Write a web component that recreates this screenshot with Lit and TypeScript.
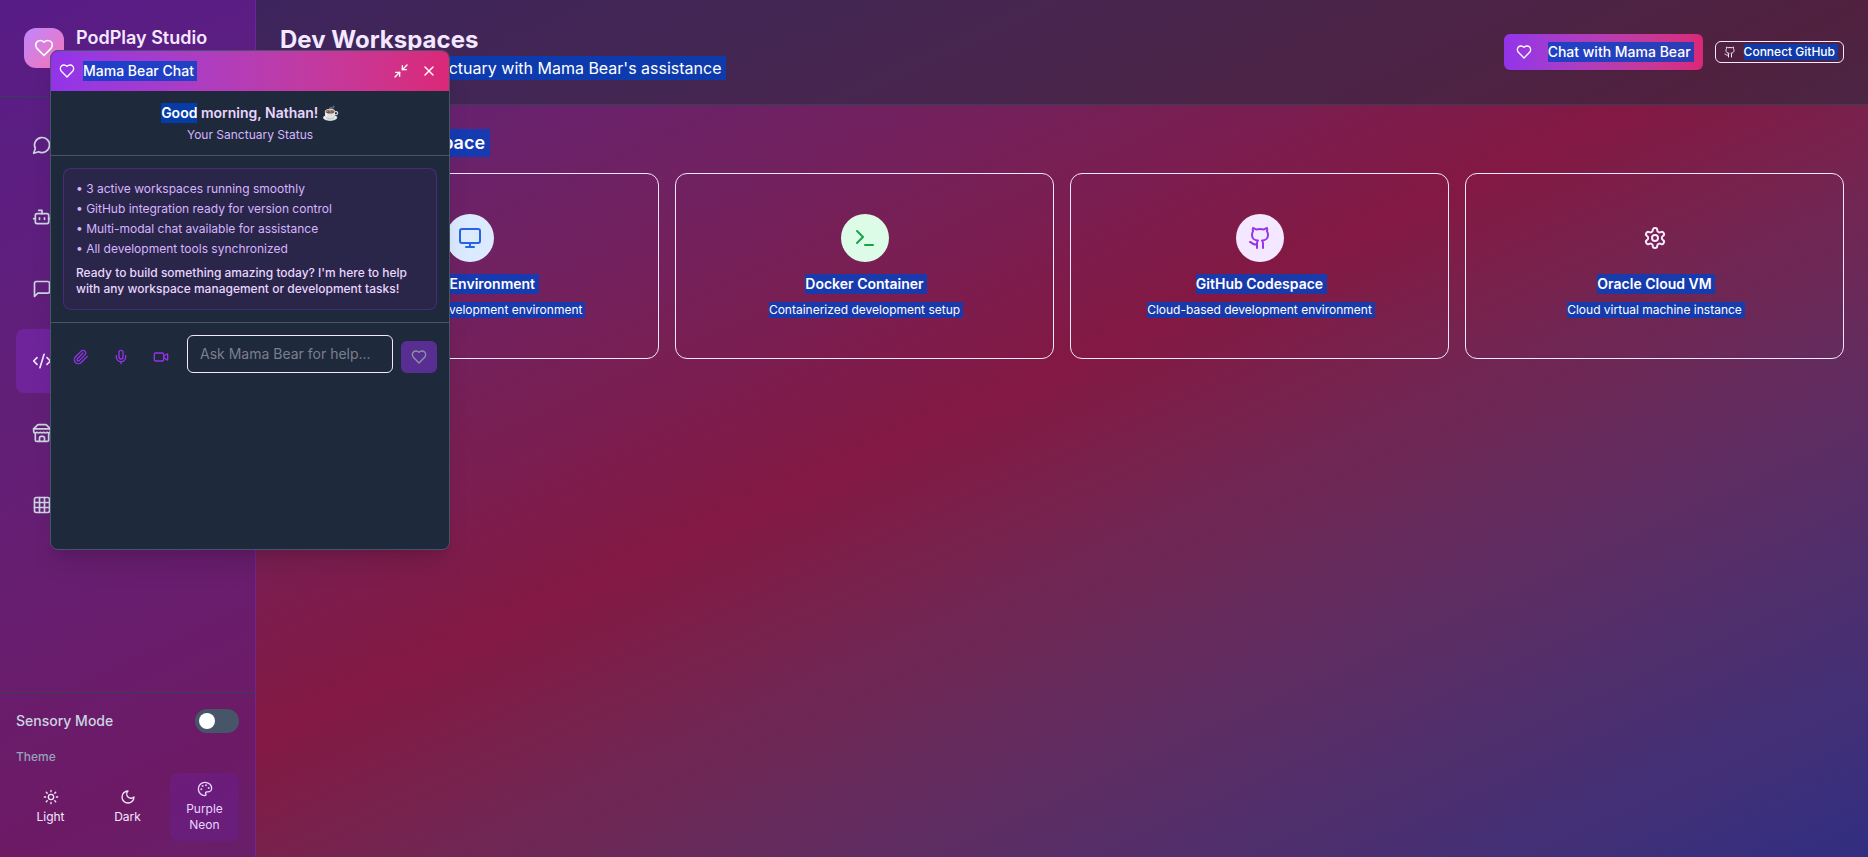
import { LitElement, html, css, svg } from "lit";
import { customElement, property } from "lit/decorators.js";

const ICONS: Record<string, unknown> = {
  heart: svg`<path d="M19 14c1.49-1.46 3-3.21 3-5.5A5.5 5.5 0 0 0 16.5 3c-1.76 0-3 .5-4.5 2-1.5-1.5-2.74-2-4.5-2A5.5 5.5 0 0 0 2 8.5c0 2.3 1.5 4.05 3 5.5l7 7Z"/>`,
  messageCircle: svg`<path d="M7.9 20A9 9 0 1 0 4 16.1L2 22Z"/>`,
  bot: svg`<path d="M12 8V4H8"/><rect width="16" height="12" x="4" y="8" rx="2"/><path d="M2 14h2M20 14h2M15 13v2M9 13v2"/>`,
  messageSquare: svg`<path d="M21 15a2 2 0 0 1-2 2H7l-4 4V5a2 2 0 0 1 2-2h14a2 2 0 0 1 2 2z"/>`,
  code: svg`<path d="m18 16 4-4-4-4"/><path d="m6 8-4 4 4 4"/><path d="m14.5 4-5 16"/>`,
  store: svg`<path d="m2 7 4.41-4.41A2 2 0 0 1 7.83 2h8.34a2 2 0 0 1 1.42.59L22 7"/><path d="M4 12v8a2 2 0 0 0 2 2h12a2 2 0 0 0 2-2v-8"/><path d="M15 22v-4a2 2 0 0 0-2-2h-2a2 2 0 0 0-2 2v4"/><path d="M2 7h20"/><path d="M22 7v3a2 2 0 0 1-2 2a2.7 2.7 0 0 1-1.59-.63.7.7 0 0 0-.82 0A2.7 2.7 0 0 1 16 12a2.7 2.7 0 0 1-1.59-.63.7.7 0 0 0-.82 0A2.7 2.7 0 0 1 12 12a2.7 2.7 0 0 1-1.59-.63.7.7 0 0 0-.82 0A2.7 2.7 0 0 1 8 12a2.7 2.7 0 0 1-1.59-.63.7.7 0 0 0-.82 0A2.7 2.7 0 0 1 4 12a2 2 0 0 1-2-2V7"/>`,
  grid: svg`<rect width="18" height="18" x="3" y="3" rx="2"/><path d="M3 9h18M3 15h18M9 3v18M15 3v18"/>`,
  paperclip: svg`<path d="m21.44 11.05-9.19 9.19a6 6 0 0 1-8.49-8.49l8.57-8.57A4 4 0 1 1 18 8.84l-8.59 8.57a2 2 0 0 1-2.83-2.83l8.49-8.48"/>`,
  mic: svg`<path d="M12 2a3 3 0 0 0-3 3v7a3 3 0 0 0 6 0V5a3 3 0 0 0-3-3Z"/><path d="M19 10v2a7 7 0 0 1-14 0v-2"/><path d="M12 19v3"/>`,
  video: svg`<path d="m16 13 5.223 3.482a.5.5 0 0 0 .777-.416V7.87a.5.5 0 0 0-.752-.432L16 10.5"/><rect x="2" y="6" width="14" height="12" rx="2"/>`,
  minimize: svg`<polyline points="4 14 10 14 10 20"/><polyline points="20 10 14 10 14 4"/><path d="M14 10l7-7M3 21l7-7"/>`,
  close: svg`<path d="M18 6 6 18"/><path d="m6 6 12 12"/>`,
  sun: svg`<circle cx="12" cy="12" r="4"/><path d="M12 2v2M12 20v2M4.93 4.93l1.41 1.41M17.66 17.66l1.41 1.41M2 12h2M20 12h2M6.34 17.66l-1.41 1.41M19.07 4.93l-1.41 1.41"/>`,
  moon: svg`<path d="M12 3a6 6 0 0 0 9 9 9 9 0 1 1-9-9Z"/>`,
  palette: svg`<circle cx="13.5" cy="6.5" r=".5" fill="currentColor"/><circle cx="17.5" cy="10.5" r=".5" fill="currentColor"/><circle cx="8.5" cy="7.5" r=".5" fill="currentColor"/><circle cx="6.5" cy="12.5" r=".5" fill="currentColor"/><path d="M12 2C6.5 2 2 6.5 2 12s4.5 10 10 10c.926 0 1.648-.746 1.648-1.688 0-.437-.18-.835-.437-1.125-.29-.289-.438-.652-.438-1.125a1.64 1.64 0 0 1 1.668-1.668h1.996c3.051 0 5.555-2.503 5.555-5.554C21.965 6.012 17.461 2 12 2z"/>`,
  monitor: svg`<rect width="20" height="14" x="2" y="3" rx="2"/><path d="M8 21h8M12 17v4"/>`,
  terminal: svg`<polyline points="4 17 10 11 4 5"/><path d="M12 19h8"/>`,
  github: svg`<path d="M15 22v-4a4.8 4.8 0 0 0-1-3.5c3 0 6-2 6-5.5.08-1.25-.27-2.48-1-3.5.28-1.15.28-2.35 0-3.5 0 0-1 0-3 1.5-2.64-.5-5.36-.5-8 0C6 2 5 2 5 2c-.3 1.15-.3 2.35 0 3.5A5.403 5.403 0 0 0 4 9c0 3.5 3 5.5 6 5.5-.39.49-.68 1.05-.85 1.65-.17.6-.22 1.23-.15 1.85v4"/><path d="M9 18c-4.51 2-5-2-7-2"/>`,
  settings: svg`<path d="M12.22 2h-.44a2 2 0 0 0-2 2v.18a2 2 0 0 1-1 1.73l-.43.25a2 2 0 0 1-2 0l-.15-.08a2 2 0 0 0-2.73.73l-.22.38a2 2 0 0 0 .73 2.73l.15.1a2 2 0 0 1 1 1.72v.51a2 2 0 0 1-1 1.74l-.15.09a2 2 0 0 0-.73 2.73l.22.38a2 2 0 0 0 2.73.73l.15-.08a2 2 0 0 1 2 0l.43.25a2 2 0 0 1 1 1.73V20a2 2 0 0 0 2 2h.44a2 2 0 0 0 2-2v-.18a2 2 0 0 1 1-1.73l.43-.25a2 2 0 0 1 2 0l.15.08a2 2 0 0 0 2.73-.73l.22-.39a2 2 0 0 0-.73-2.73l-.15-.08a2 2 0 0 1-1-1.74v-.5a2 2 0 0 1 1-1.74l.15-.09a2 2 0 0 0 .73-2.73l-.22-.38a2 2 0 0 0-2.73-.73l-.15.08a2 2 0 0 1-2 0l-.43-.25a2 2 0 0 1-1-1.73V4a2 2 0 0 0-2-2z"/><circle cx="12" cy="12" r="3"/>`,
};

const icon = (name: string, size = 16) => html`<svg width=${size} height=${size} viewBox="0 0 24 24" fill="none" stroke="currentColor" stroke-width="2" stroke-linecap="round" stroke-linejoin="round">${ICONS[name]}</svg>`;

const shared = css`
  * { box-sizing: border-box; margin: 0; }
  svg { display: block; flex: none; }
  button { font: inherit; color: inherit; background: none; border: 0; padding: 0; }
  /* selected text: the highlight runs one space past the end of the line */
  .sel {
    display: inline-block;
    color: #fff;
    background: rgba(0, 65, 195, 0.8);
    padding-right: 0.25em;
    margin-right: -0.25em;
  }
`;

@customElement("side-bar")
class SideBar extends LitElement {
  static styles = [shared, css`
    :host { display: flex; flex-direction: column; width: 256px; flex: none; background: rgba(88, 28, 135, 0.5); border-right: 1px solid rgba(147, 51, 234, 0.3); }
    .brand { display: flex; align-items: center; gap: 12px; height: 97px; padding: 24px; border-bottom: 1px solid rgba(51, 65, 85, 1); }
    .logo { width: 40px; height: 40px; border-radius: 12px; display: grid; place-items: center; color: #fff; background: linear-gradient(to bottom right in oklab, #c084fc, #f472b6); }
    .name { font-size: 18px; line-height: 28px; font-weight: 600; color: #f3e8ff; padding-bottom: 20px; white-space: nowrap; }
    nav { flex: 1; display: flex; flex-direction: column; gap: 8px; padding: 16px; }
    .item { height: 64px; padding: 0 16px; border-radius: 8px; display: flex; align-items: center; color: #cbd5e1; }
    .item.active { background: rgba(147, 51, 234, 0.3); color: #f3e8ff; }
    .foot { padding: 16px; border-top: 1px solid #334155; }
    .row { display: flex; align-items: center; justify-content: space-between; font-size: 14px; font-weight: 500; color: #cbd5e1; }
    .toggle { width: 44px; height: 24px; border-radius: 12px; background: #475569; padding: 4px; }
    .knob { width: 16px; height: 16px; border-radius: 50%; background: #fff; }
    .label { margin: 16px 0 8px; font-size: 12px; line-height: 16px; font-weight: 500; color: #94a3b8; }
    .themes { display: grid; grid-template-columns: repeat(3, 1fr); gap: 8px; }
    .theme { min-height: 68px; padding: 8px; border-radius: 8px; display: flex; flex-direction: column; gap: 4px; align-items: center; justify-content: center; text-align: center; font-size: 12px; line-height: 16px; color: #f3e8ff; }
    .theme.active { background: rgba(107, 33, 168, 0.3); color: #e9d5ff; }
  `];
  render() {
    const items = ["messageCircle", "bot", "messageSquare", "code", "store", "grid"];
    return html`
      <div class="brand"><div class="logo">${icon("heart", 20)}</div><div class="name">PodPlay Studio</div></div>
      <nav>${items.map((n) => html`<div class="item ${n === "code" ? "active" : ""}">${icon(n, 20)}</div>`)}</nav>
      <div class="foot">
        <div class="row"><span>Sensory Mode</span><div class="toggle"><div class="knob"></div></div></div>
        <div class="label">Theme</div>
        <div class="themes">
          <button class="theme">${icon("sun")}Light</button>
          <button class="theme">${icon("moon")}Dark</button>
          <button class="theme active">${icon("palette")}Purple Neon</button>
        </div>
      </div>`;
  }
}

@customElement("template-card")
class TemplateCard extends LitElement {
  @property() icon = "";
  @property() tone = "";
  @property() name = "";
  @property() desc = "";
  static styles = [shared, css`
    :host { display: flex; flex-direction: column; align-items: center; padding: 40px 24px; border: 1px solid #f3e8ff; border-radius: 12px; text-align: center; }
    .disc { width: 48px; height: 48px; border-radius: 50%; display: grid; place-items: center; margin-bottom: 12px; color: #f3e8ff; }
    .blue { background: #dbeafe; color: #2563eb; }
    .green { background: #dcfce7; color: #16a34a; }
    .purple { background: #f3e8ff; color: #9333ea; }
    .title { font-size: 14px; line-height: 20px; font-weight: 600; margin-bottom: 8px; white-space: nowrap; }
    .desc { font-size: 12px; line-height: 16px; white-space: nowrap; }
  `];
  render() {
    return html`<div class="disc ${this.tone}">${icon(this.icon, 24)}</div>
      <div class="title"><span class="sel">${this.name}</span></div>
      <div class="desc"><span class="sel">${this.desc}</span></div>`;
  }
}

@customElement("chat-window")
class ChatWindow extends LitElement {
  static styles = [shared, css`
    :host { display: block; width: 400px; height: 500px; background: #1e293b; border: 1px solid #475569; border-radius: 8px; overflow: hidden; box-shadow: 0 20px 25px -5px rgba(0, 0, 0, 0.1), 0 8px 10px -6px rgba(0, 0, 0, 0.1); }
    .bar { display: flex; align-items: center; gap: 8px; height: 40px; padding: 0 8px; color: #fff; background: linear-gradient(to right in oklab, #9333ea, #db2777); font-size: 14px; line-height: 20px; font-weight: 500; }
    .tools { display: flex; gap: 4px; margin-left: auto; }
    .tools button { width: 24px; height: 24px; display: grid; place-items: center; }
    .hello { padding: 12px; text-align: center; border-bottom: 1px solid #475569; }
    .hi { display: flex; justify-content: center; white-space: pre; font-size: 14px; line-height: 20px; height: 20px; font-weight: 600; color: #e9d5ff; }
    .hi .sel { padding: 0; margin: 0; }
    .sub { margin-top: 4px; font-size: 12px; line-height: 16px; color: #d8b4fe; }
    .body { padding: 12px; border-bottom: 1px solid #475569; }
    .card { border: 1px solid rgba(147, 51, 234, 0.3); border-radius: 8px; background: rgba(88, 28, 135, 0.2); padding: 12px; font-size: 12px; line-height: 16px; color: #d8b4fe; display: flex; flex-direction: column; gap: 4px; }
    .ready { margin-top: 4px; font-weight: 500; color: #e9d5ff; }
    .compose { display: flex; align-items: flex-end; gap: 8px; padding: 12px; }
    .acts { display: flex; gap: 4px; color: #9333ea; }
    .acts button { width: 36px; height: 32px; display: grid; place-items: center; }
    .field { flex: 1; min-width: 0; height: 38px; border: 1px solid #f3e8ff; border-radius: 6px; padding: 8px 12px; font-size: 14px; line-height: 20px; color: #7b7f8f; white-space: nowrap; }
    .send { width: 36px; height: 32px; border-radius: 6px; display: grid; place-items: center; background: #9333ea; color: #fff; opacity: 0.5; }
  `];
  render() {
    return html`
      <div class="bar">${icon("heart")}<span class="sel">Mama Bear Chat</span>
        <div class="tools"><button>${icon("minimize")}</button><button>${icon("close")}</button></div></div>
      <div class="hello"><div class="hi"><span class="sel">Good</span><span> morning, Nathan! ☕</span></div><div class="sub">Your Sanctuary Status</div></div>
      <div class="body"><div class="card">
        <div>• 3 active workspaces running smoothly</div>
        <div>• GitHub integration ready for version control</div>
        <div>• Multi-modal chat available for assistance</div>
        <div>• All development tools synchronized</div>
        <div class="ready">Ready to build something amazing today? I'm here to help with any workspace management or development tasks!</div>
      </div></div>
      <div class="compose">
        <div class="acts"><button>${icon("paperclip")}</button><button>${icon("mic")}</button><button>${icon("video")}</button></div>
        <div class="field">Ask Mama Bear for help...</div>
        <button class="send">${icon("heart")}</button>
      </div>`;
  }
}

@customElement("app-root")
class AppRoot extends LitElement {
  static styles = [shared, css`
    :host { display: flex; position: relative; height: 100vh; overflow: hidden; font-family: Inter, "Noto Sans", sans-serif; font-size: 16px; line-height: 24px; background: linear-gradient(to bottom right in oklab, #581c87, #831843, #312e81); }
    main { flex: 1; min-width: 0; }
    header { display: flex; align-items: center; justify-content: space-between; padding: 24px; height: 105px; background: rgba(30, 41, 59, 0.5); border-bottom: 1px solid #334155; }
    h1 { font-size: 24px; line-height: 32px; font-weight: 700; color: #f3e8ff; }
    .lead { height: 24px; }
    .actions { display: flex; align-items: center; gap: 12px; }
    .chat { display: flex; align-items: center; gap: 16px; height: 36px; padding: 0 12px; border-radius: 6px; color: #fff; background: linear-gradient(to right in oklab, #9333ea, #db2777); box-shadow: 0 1px 2px rgba(0, 0, 0, 0.05); font-size: 14px; line-height: 20px; font-weight: 500; }
    .github { display: flex; align-items: center; gap: 8px; height: 22px; padding: 0 8px; border: 1px solid #f3e8ff; border-radius: 6px; color: #f3e8ff; font-size: 12px; line-height: 16px; font-weight: 500; }
    .content { padding: 24px; }
    h2 { font-size: 18px; line-height: 28px; height: 28px; font-weight: 600; margin-bottom: 16px; }
    .cards { display: grid; grid-template-columns: repeat(4, 1fr); gap: 16px; }
    chat-window { position: absolute; left: 50px; top: 50px; }
  `];
  render() {
    return html`
      <side-bar></side-bar>
      <main>
        <header>
          <div><h1>Dev Workspaces</h1><div class="lead"><span class="sel">Your development sanctuary with Mama Bear's assistance</span></div></div>
          <div class="actions">
            <button class="chat">${icon("heart")}<span class="sel">Chat with Mama Bear</span></button>
            <button class="github">${icon("github", 12)}<span class="sel">Connect GitHub</span></button>
          </div>
        </header>
        <section class="content">
          <h2><span class="sel">Create New Workspace</span></h2>
          <div class="cards">
            <template-card icon="monitor" tone="blue" name="NixOS Environment" desc="Reproducible development environment"></template-card>
            <template-card icon="terminal" tone="green" name="Docker Container" desc="Containerized development setup"></template-card>
            <template-card icon="github" tone="purple" name="GitHub Codespace" desc="Cloud-based development environment"></template-card>
            <template-card icon="settings" name="Oracle Cloud VM" desc="Cloud virtual machine instance"></template-card>
          </div>
        </section>
      </main>
      <chat-window></chat-window>`;
  }
}
